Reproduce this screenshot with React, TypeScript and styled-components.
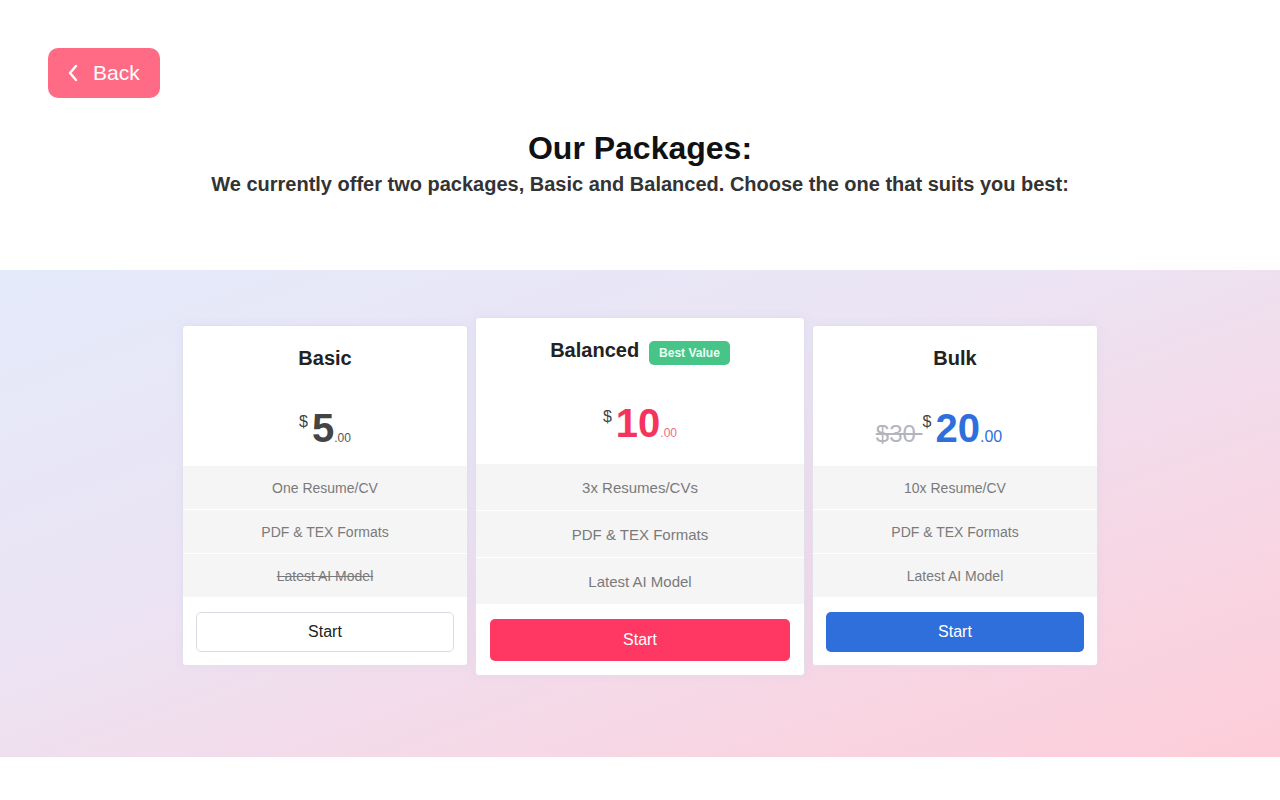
import React from "react";
import styled, { createGlobalStyle } from "styled-components";

const Global = createGlobalStyle`
  html, body { margin: 0; padding: 0; background: #fff; }
  body { font-family: "Liberation Sans", Arial, Helvetica, sans-serif; }
  * { box-sizing: border-box; }
`;

const Page = styled.div`
  width: 1280px;
  min-height: 800px;
  display: flex;
  flex-direction: column;
`;

const Top = styled.div`
  padding: 48px 48px 0;
  display: flex;
  flex-direction: column;
`;

const BackButton = styled.button`
  align-self: flex-start;
  width: 112px;
  height: 50px;
  border: none;
  border-radius: 10px;
  background: #ff6b85;
  color: #fff;
  font-family: inherit;
  font-size: 21px;
  display: flex;
  align-items: center;
  gap: 14px;
  padding: 0 0 0 19px;
  cursor: pointer;
`;

const Header = styled.div`
  margin-top: 32px;
  text-align: center;
`;

const Title = styled.h1`
  margin: 0;
  font-size: 32px;
  font-weight: 700;
  color: #111;
  line-height: 36px;
`;

const Subtitle = styled.p`
  margin: 6px 0 0;
  font-size: 20px;
  font-weight: 700;
  color: #333;
  line-height: 24px;
`;

const Band = styled.section`
  margin-top: 74px;
  height: 487px;
  background: linear-gradient(160deg, #e4eafa 0%, #ebe4f4 40%, #f6d8e6 70%, #fdcdd9 100%);
  display: flex;
  justify-content: center;
  align-items: flex-start;
  gap: 9px;
  padding-top: 48px;
`;

const Card = styled.div<{ $featured?: boolean }>`
  width: ${(p) => (p.$featured ? 328 : 284)}px;
  margin-top: ${(p) => (p.$featured ? 0 : 8)}px;
  background: #fff;
  border-radius: 3px;
  box-shadow: 0 0 10px rgba(200, 200, 230, 0.35), 0 0 0 1px rgba(230, 230, 240, 0.9);
  display: flex;
  flex-direction: column;
`;

const CardHead = styled.div<{ $featured?: boolean }>`
  height: ${(p) => (p.$featured ? 146 : 140)}px;
  display: flex;
  flex-direction: column;
  align-items: center;
  padding-top: 20px;
`;

const NameRow = styled.div`
  display: flex;
  align-items: center;
  gap: 10px;
  height: 24px;
`;

const Name = styled.h2`
  margin: 0;
  font-size: 20px;
  font-weight: 700;
  color: #222;
`;

const Badge = styled.span`
  margin-top: 5px;
  background: #47c488;
  color: #eafff3;
  font-size: 12px;
  font-weight: 700;
  padding: 0 10px;
  height: 24px;
  line-height: 24px;
  border-radius: 5px;
`;

const Price = styled.div<{ $featured?: boolean; $shift?: number }>`
  margin-top: ${(p) => (p.$featured ? 41 : 38)}px;
  margin-right: ${(p) => p.$shift ?? 0}px;
  font-size: 40px;
  line-height: 40px;
  height: 40px;
  white-space: nowrap;
`;

const OldPrice = styled.span`
  font-size: 24px;
  line-height: 1;
  color: #b4b4bc;
  text-decoration: line-through;
`;

const Dollar = styled.span`
  font-size: 16px;
  line-height: 1;
  color: #444;
  vertical-align: 15px;
  margin-right: 4px;
`;

const Amount = styled.span<{ $color: string }>`
  font-weight: 700;
  color: ${(p) => p.$color};
`;

const Cents = styled.span<{ $color: string; $size: number }>`
  font-size: ${(p) => p.$size}px;
  line-height: 1;
  color: ${(p) => p.$color};
`;

const Features = styled.ul`
  list-style: none;
  margin: 0;
  padding: 0;
  display: flex;
  flex-direction: column;
  gap: 1px;
`;

const Feature = styled.li<{ $featured?: boolean; $struck?: boolean }>`
  height: ${(p) => (p.$featured ? 46 : 43)}px;
  background: #f5f5f6;
  color: #7a7a7a;
  font-size: ${(p) => (p.$featured ? 15 : 14)}px;
  display: flex;
  align-items: center;
  justify-content: center;
  text-decoration: ${(p) => (p.$struck ? "line-through" : "none")};
`;

const Foot = styled.div<{ $featured?: boolean }>`
  padding: ${(p) => (p.$featured ? "15px 14px 14px" : "15px 13px 13px")};
`;

const StartButton = styled.button<{ $variant: "plain" | "red" | "blue"; $featured?: boolean }>`
  width: 100%;
  height: ${(p) => (p.$featured ? 42 : 40)}px;
  border-radius: 5px;
  font-family: inherit;
  font-size: 16px;
  cursor: pointer;
  border: ${(p) => (p.$variant === "plain" ? "1px solid #d8dce4" : "none")};
  background: ${(p) =>
    p.$variant === "plain" ? "#fff" : p.$variant === "red" ? "#ff3763" : "#2f6fdc"};
  color: ${(p) => (p.$variant === "plain" ? "#222" : "#fff")};
`;

const Chevron = () => (
  <svg width="12" height="18" viewBox="0 0 12 18" fill="none">
    <path d="M9 2L3 9l6 7" stroke="#fff" strokeWidth="2.4" strokeLinecap="round" strokeLinejoin="round" />
  </svg>
);

export default function App() {
  return (
    <Page>
      <Global />
      <Top>
        <BackButton>
          <Chevron />
          Back
        </BackButton>
        <Header>
          <Title>Our Packages:</Title>
          <Subtitle>
            We currently offer two packages, Basic and Balanced. Choose the one that suits you best:
          </Subtitle>
        </Header>
      </Top>
      <Band>
        <Card>
          <CardHead>
            <NameRow>
              <Name>Basic</Name>
            </NameRow>
            <Price>
              <Dollar>$</Dollar>
              <Amount $color="#444">5</Amount>
              <Cents $color="#555" $size={12}>.00</Cents>
            </Price>
          </CardHead>
          <Features>
            <Feature>One Resume/CV</Feature>
            <Feature>PDF &amp; TEX Formats</Feature>
            <Feature $struck>Latest AI Model</Feature>
          </Features>
          <Foot>
            <StartButton $variant="plain">Start</StartButton>
          </Foot>
        </Card>
        <Card $featured>
          <CardHead $featured>
            <NameRow>
              <Name>Balanced</Name>
              <Badge>Best Value</Badge>
            </NameRow>
            <Price $featured>
              <Dollar>$</Dollar>
              <Amount $color="#f5335e">10</Amount>
              <Cents $color="#f06a8a" $size={12}>.00</Cents>
            </Price>
          </CardHead>
          <Features>
            <Feature $featured>3x Resumes/CVs</Feature>
            <Feature $featured>PDF &amp; TEX Formats</Feature>
            <Feature $featured>Latest AI Model</Feature>
          </Features>
          <Foot $featured>
            <StartButton $variant="red" $featured>Start</StartButton>
          </Foot>
        </Card>
        <Card>
          <CardHead>
            <NameRow>
              <Name>Bulk</Name>
            </NameRow>
            <Price $shift={32}>
              <OldPrice>$30&nbsp;</OldPrice>
              <Dollar>$</Dollar>
              <Amount $color="#2f6fdc">20</Amount>
              <Cents $color="#2f6fdc" $size={16}>.00</Cents>
            </Price>
          </CardHead>
          <Features>
            <Feature>10x Resume/CV</Feature>
            <Feature>PDF &amp; TEX Formats</Feature>
            <Feature>Latest AI Model</Feature>
          </Features>
          <Foot>
            <StartButton $variant="blue">Start</StartButton>
          </Foot>
        </Card>
      </Band>
    </Page>
  );
}
